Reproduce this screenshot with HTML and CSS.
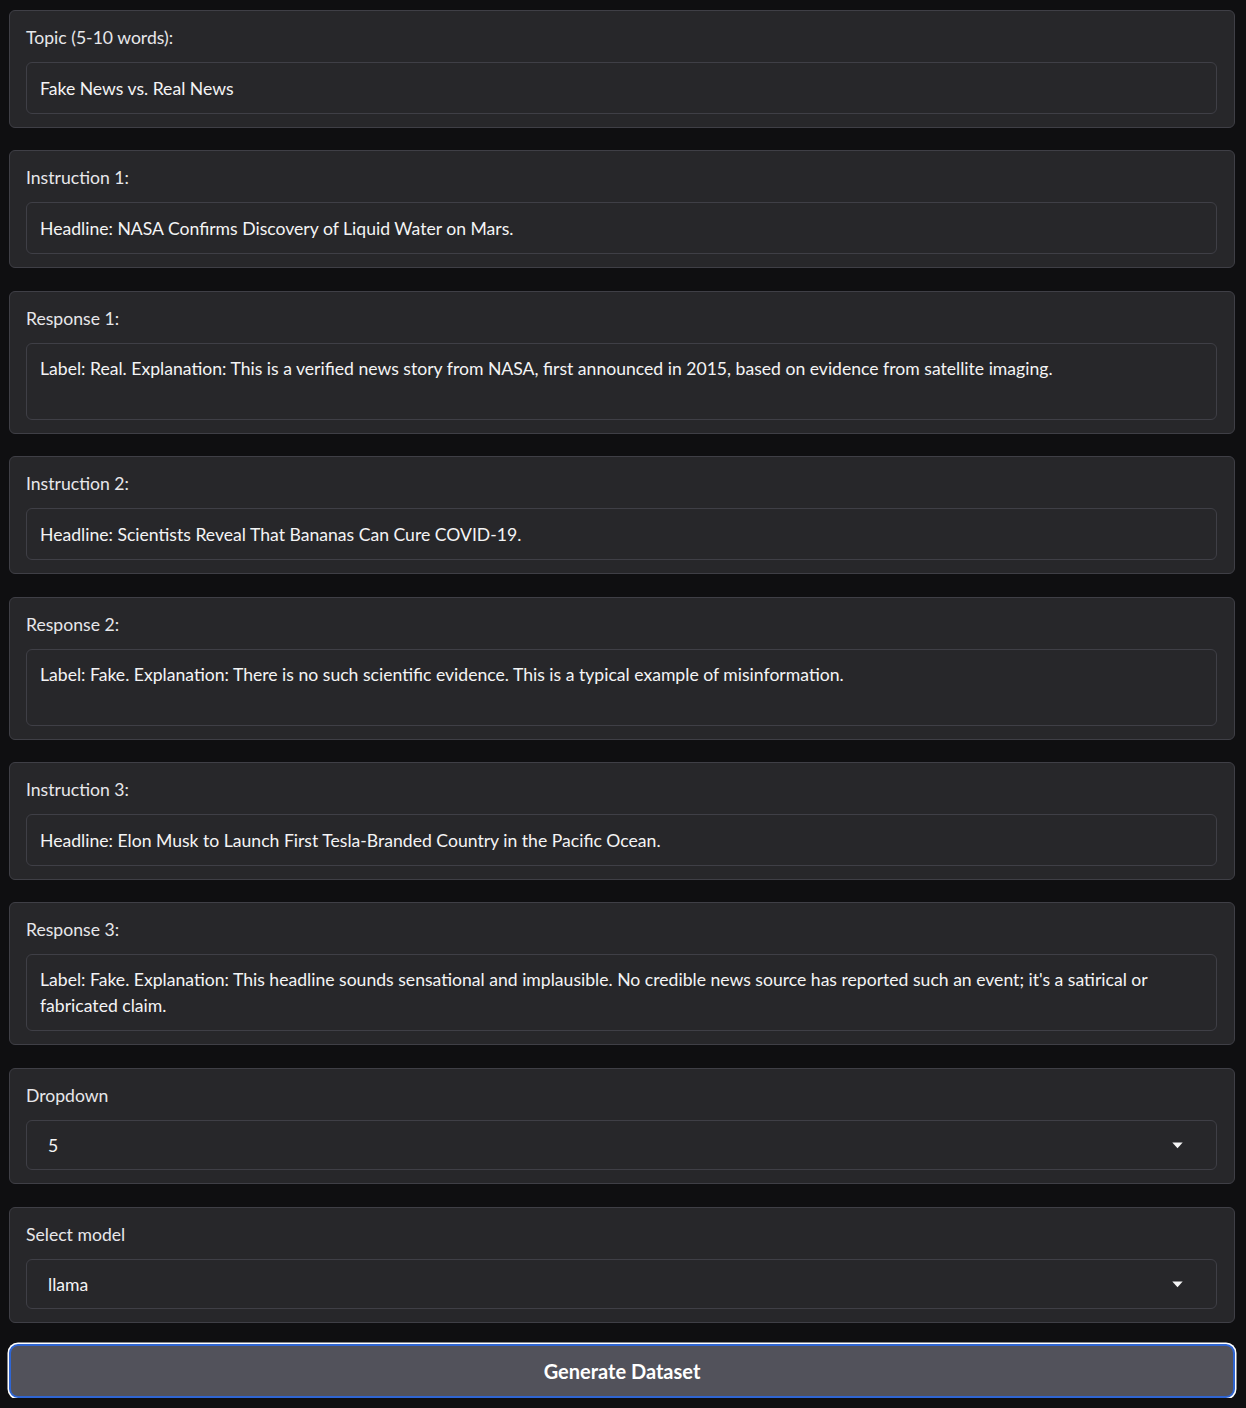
FILE: index.html
```html
<!DOCTYPE html>
<html lang="en">
<head>
<meta charset="utf-8">
<title>Dataset Generator</title>
<link rel="stylesheet" href="styles.css">
</head>
<body>
<main class="app">
  <section class="block">
    <label class="block-title">Topic (5-10 words):</label>
    <div class="field">Fake News vs. Real News</div>
  </section>
  <section class="block">
    <label class="block-title">Instruction 1:</label>
    <div class="field">Headline: NASA Confirms Discovery of Liquid Water on Mars.</div>
  </section>
  <section class="block">
    <label class="block-title">Response 1:</label>
    <div class="field area">Label: Real. Explanation: This is a verified news story from NASA, first announced in 2015, based on evidence from satellite imaging.</div>
  </section>
  <section class="block">
    <label class="block-title">Instruction 2:</label>
    <div class="field">Headline: Scientists Reveal That Bananas Can Cure COVID-19.</div>
  </section>
  <section class="block">
    <label class="block-title">Response 2:</label>
    <div class="field area">Label: Fake. Explanation: There is no such scientific evidence. This is a typical example of misinformation.</div>
  </section>
  <section class="block">
    <label class="block-title">Instruction 3:</label>
    <div class="field">Headline: Elon Musk to Launch First Tesla-Branded Country in the Pacific Ocean.</div>
  </section>
  <section class="block">
    <label class="block-title">Response 3:</label>
    <div class="field area">Label: Fake. Explanation: This headline sounds sensational and implausible. No credible news source has reported such an event; it's a satirical or fabricated claim.</div>
  </section>
  <section class="block">
    <label class="block-title">Dropdown</label>
    <div class="field select">
      <span>5</span>
      <svg class="caret" width="11" height="7" viewBox="0 0 11 7"><path d="M0.3 0.5 H10.7 L5.5 6.3 Z" fill="#f4f4f5"/></svg>
    </div>
  </section>
  <section class="block">
    <label class="block-title">Select model</label>
    <div class="field select">
      <span>llama</span>
      <svg class="caret" width="11" height="7" viewBox="0 0 11 7"><path d="M0.3 0.5 H10.7 L5.5 6.3 Z" fill="#f4f4f5"/></svg>
    </div>
  </section>
  <button class="btn">Generate Dataset</button>
</main>
</body>
</html>
```
FILE: styles.css
```css
* { box-sizing: border-box; }
html, body { margin: 0; padding: 0; }
body {
  background: #0f0f11;
  font-family: "Lato", "Liberation Sans", sans-serif;
  color: #f4f4f5;
}
.app {
  display: flex;
  flex-direction: column;
  gap: 22.4px;
  padding: 10px 11px 0 9px;
}
.block {
  background: #27272a;
  border: 1px solid #3f3f46;
  border-radius: 6px;
  padding: 14px 17px 13px 16px;
  display: flex;
  flex-direction: column;
}
.block-title {
  font-size: 17.6px;
  line-height: 26px;
  color: #e7e7ea;
  margin-bottom: 11px;
}
.field {
  background: #27272a;
  border: 1px solid #3f3f46;
  border-radius: 6px;
  padding: 13px 13px 11px;
  font-size: 17.6px;
  line-height: 26px;
  color: #f4f4f5;
  height: 52px;
}
.field.area {
  height: 77px;
  padding: 12px 13px;
}
.field.select {
  display: flex;
  align-items: center;
  justify-content: space-between;
  padding: 1px 33px 0 21px;
  height: 50.6px;
}
.caret { display: block; }
.btn {
  margin-top: -2px;
  height: 54px;
  background: #52525b;
  border: 2px solid #2f65d2;
  box-shadow: 0 0 0 1.5px #ffffff;
  border-radius: 9px;
  color: #ffffff;
  font-family: "Lato", "Liberation Sans", sans-serif;
  font-weight: 700;
  font-size: 20px;
}
```
